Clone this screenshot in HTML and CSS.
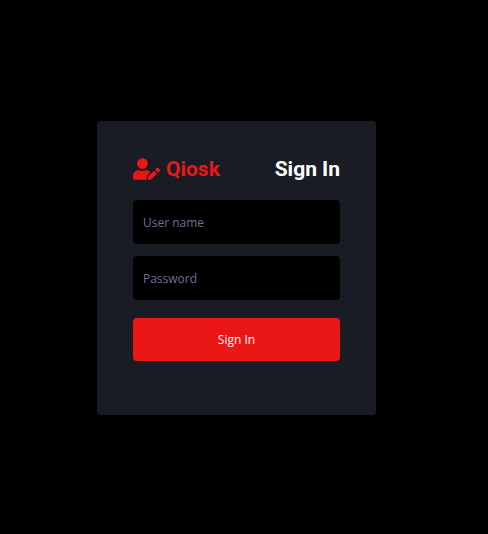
FILE: index.html
```html
<!DOCTYPE html>
<html lang="en">
<head>
<meta charset="utf-8">
<meta name="viewport" content="width=device-width, initial-scale=1">
<title>Qiosk - Sign In</title>
<link rel="stylesheet" href="styles.css">
</head>
<body>
<main class="page">
  <form class="card">
    <header class="card-header">
      <a class="brand" href="#">
        <svg class="brand-icon" viewBox="0 0 640 512" aria-hidden="true"><path fill="currentColor" d="M224 256c70.7 0 128-57.3 128-128S294.7 0 224 0 96 57.3 96 128s57.3 128 128 128zm89.6 32h-16.7c-22.2 10.2-46.9 16-72.9 16s-50.6-5.8-72.9-16h-16.7C60.2 288 0 348.2 0 422.4V464c0 26.5 21.5 48 48 48h274.9c-2.4-6.8-3.4-14-2.6-21.3l6.8-60.9 1.2-11.1 7.9-7.9 77.3-77.3c-24.5-27.7-60-45.5-99.9-45.5zm45.3 145.3l-6.8 61c-1.1 10.2 7.5 18.8 17.6 17.6l60.9-6.8 137.9-137.9-71.7-71.7-137.9 137.8zM633 268.9L595.1 231c-9.3-9.3-24.5-9.3-33.8 0l-37.8 37.8-4.1 4.1 71.8 71.7 41.8-41.8c9.3-9.4 9.3-24.5 0-33.9z"/></svg>
        <span>Qiosk</span>
      </a>
      <h1 class="title">Sign In</h1>
    </header>
    <input class="field" type="text" placeholder="User name" aria-label="User name">
    <input class="field" type="password" placeholder="Password" aria-label="Password">
    <button class="submit" type="submit">Sign In</button>
  </form>
</main>
</body>
</html>
```
FILE: styles.css
```css
* {
  box-sizing: border-box;
}

body {
  margin: 0;
  background: #000;
  font-family: "Open Sans", sans-serif;
  font-size: 12px;
}

.page {
  display: flex;
  align-items: center;
  justify-content: center;
  min-height: 100vh;
  padding: 2px 15px 0 0;
}

.card {
  display: flex;
  flex-direction: column;
  gap: 12px;
  width: 59%;
  min-width: 260px;
  max-width: 400px;
  padding: 36px 36px 54px;
  border-radius: 4px;
  background: #191c24;
}

.card-header {
  display: flex;
  align-items: center;
  justify-content: space-between;
  margin-bottom: 7px;
  font-family: Roboto, sans-serif;
  font-size: 21px;
  font-weight: 700;
  line-height: 24px;
}

.brand {
  display: flex;
  align-items: center;
  gap: 6px;
  color: #eb1616;
  text-decoration: none;
}

.brand-icon {
  width: 27px;
  height: 22px;
}

.title {
  margin: 0;
  color: #fff;
  font: inherit;
}

.field,
.submit {
  width: 100%;
  border: 0;
  border-radius: 4px;
  font: inherit;
}

.field {
  height: 44px;
  padding: 0 10px;
  background: #000;
  color: #6c7293;
}

.field::placeholder {
  color: #6c7293;
  opacity: 1;
}

.submit {
  height: 43px;
  margin-top: 6px;
  background: #eb1616;
  color: #fff;
  cursor: pointer;
}
```
